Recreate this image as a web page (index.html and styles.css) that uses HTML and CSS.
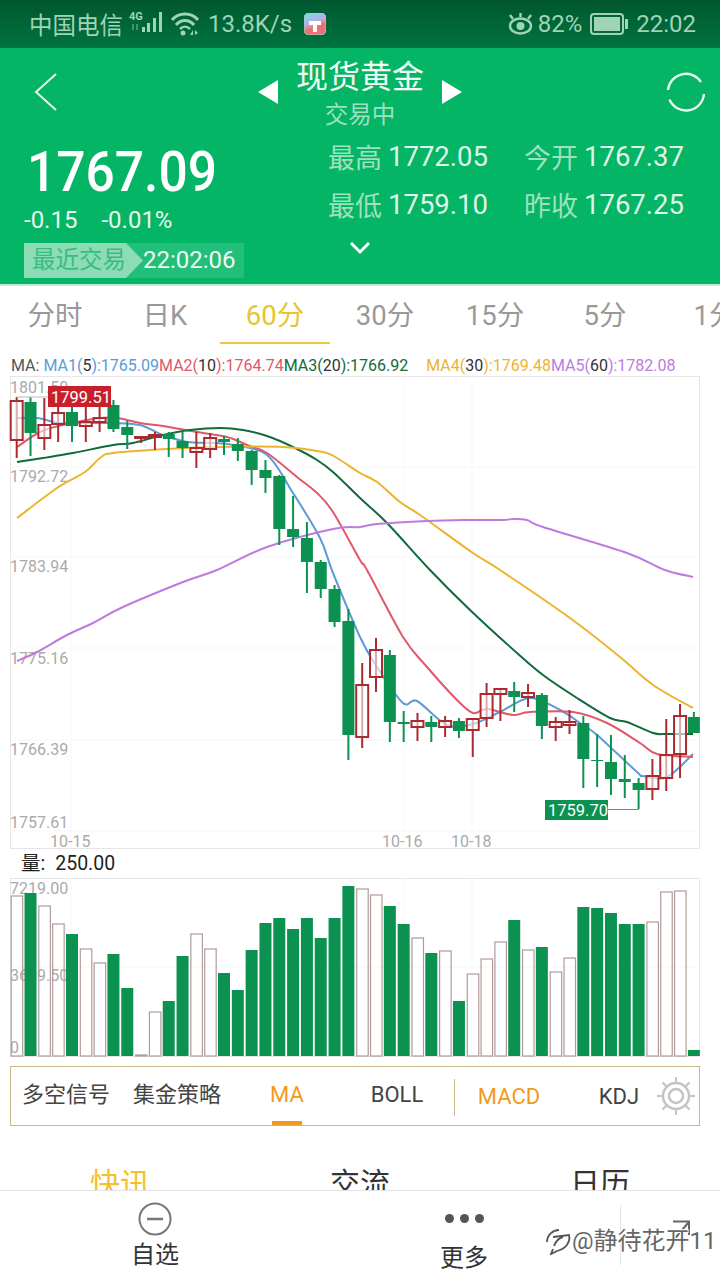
FILE: index.html
```html
<!DOCTYPE html>
<html lang="zh-CN">
<head>
    <meta charset="UTF-8">
    <meta name="viewport" content="width=device-width, initial-scale=1.0">
    <title>现货黄金</title>
    <link rel="stylesheet" href="styles.css">
</head>
<body>
<div class="page">

    <div class="status-bar">
        <div class="status-left">
            <span class="carrier">中国电信</span>
            <svg class="ic-signal" width="36" height="30" viewBox="0 0 36 30">
                <text x="0" y="11" class="net-label">4G</text>
                <rect x="3" y="15" width="2" height="6" class="solid" opacity="0.4"/>
                <rect x="7" y="15" width="2" height="6" class="solid" opacity="0.4"/>
                <rect x="13" y="18" width="3" height="5" class="solid"/>
                <rect x="18" y="14" width="3" height="9" class="solid"/>
                <rect x="24" y="9" width="3" height="14" class="solid"/>
                <rect x="30" y="3" width="3" height="20" class="solid"/>
            </svg>
            <svg class="ic-wifi" width="28" height="26" viewBox="0 0 28 26">
                <path d="M1 9 C8 1 20 1 27 9" fill="none" stroke-width="3"/>
                <path d="M5 14 C10 8 18 8 23 14" fill="none" stroke-width="3"/>
                <path d="M9 18 C12 15 16 15 19 18" fill="none" stroke-width="2.5"/>
                <circle cx="12" cy="22" r="2.5" class="solid"/>
                <path d="M19 24 l3 -5 v5 z M24 19 v5 l3 -2 z" class="solid"/>
            </svg>
            <span class="net-speed">13.8K/s</span>
            <svg class="ic-app" width="22" height="22" viewBox="0 0 22 22">
                <defs>
                    <linearGradient id="appGrad" x1="0.2" y1="0" x2="0.6" y2="1">
                        <stop offset="0" stop-color="#7fdce0"/>
                        <stop offset="0.45" stop-color="#b8a8ea"/>
                        <stop offset="0.7" stop-color="#f0705a"/>
                        <stop offset="1" stop-color="#e8709a"/>
                    </linearGradient>
                </defs>
                <rect width="22" height="22" rx="5" fill="url(#appGrad)"/>
                <path d="M5 8 H17 V12 H13 V19 H9 V12 H5 Z" class="brush"/>
            </svg>
        </div>
        <div class="status-right">
            <svg class="ic-eye" width="25" height="24" viewBox="0 0 25 24">
                <ellipse cx="12.5" cy="14" rx="10.5" ry="7.5" fill="none" stroke-width="2.4"/>
                <circle cx="12.5" cy="14" r="4" class="solid"/>
                <path d="M5 7 L2 3 M12.5 5 V1 M20 7 L23 3" fill="none" stroke-width="2.4"/>
            </svg>
            <span>82%</span>
            <svg class="ic-battery" width="39" height="24" viewBox="0 0 39 24">
                <rect x="1" y="2" width="32" height="20" rx="3" fill="none" stroke-width="2"/>
                <rect x="4" y="5" width="26" height="14" class="solid"/>
                <rect x="35" y="7" width="3" height="10" class="solid"/>
            </svg>
            <span>22:02</span>
        </div>
    </div>

    <div class="header">
        <div class="head-top">
            <svg class="ic-back" width="24" height="38" viewBox="0 0 24 38">
                <path d="M22 1 L2 19 L22 37" fill="none" stroke="#e8f8f0" stroke-width="2"/>
            </svg>
            <div class="title-wrap">
                <i class="arrow-left"></i>
                <div class="title-text">
                    <div class="title">现货黄金</div>
                    <div class="subtitle">交易中</div>
                </div>
                <i class="arrow-right"></i>
            </div>
            <svg class="ic-refresh" width="40" height="40" viewBox="0 0 40 40">
                <path d="M2 18 A18 18 0 0 1 35 10" fill="none" stroke="#e8f8f0" stroke-width="2.4"/>
                <path d="M38 22 A18 18 0 0 1 3.500 27.500" fill="none" stroke="#e8f8f0" stroke-width="2.4"/>
            </svg>
        </div>
        <div class="quote">
            <div class="quote-left">
                <div class="price">1767.09</div>
                <div class="change"><span>-0.15</span><span>-0.01%</span></div>
                <div class="last-trade">
                    <span class="last-label">最近交易</span>
                    <span class="last-time">22:02:06</span>
                </div>
            </div>
            <div class="quote-right">
                <div class="stats">
                    <div class="stat"><span class="stat-label">最高</span><span class="stat-value">1772.05</span></div>
                    <div class="stat"><span class="stat-label">今开</span><span class="stat-value">1767.37</span></div>
                    <div class="stat"><span class="stat-label">最低</span><span class="stat-value">1759.10</span></div>
                    <div class="stat"><span class="stat-label">昨收</span><span class="stat-value">1767.25</span></div>
                </div>
                <div class="expand">
                    <svg width="22" height="14" viewBox="0 0 22 14">
                        <path d="M2 2 L11 11 L20 2" fill="none" stroke="#fff" stroke-width="3"/>
                    </svg>
                </div>
            </div>
        </div>
    </div>

    <div class="periods">
        <div class="period">分时</div>
        <div class="period">日K</div>
        <div class="period active">60分</div>
        <div class="period">30分</div>
        <div class="period">15分</div>
        <div class="period">5分</div>
        <div class="period">1分</div>
    </div>

    <div class="legend">
        <span>MA:</span>
        <span class="ma1 first">MA1(<b>5</b>):1765.09</span><span class="ma2">MA2(<b>10</b>):1764.74</span><span class="ma3">MA3(<b>20</b>):1766.92</span>
        <span class="ma4">MA4(<b>30</b>):1769.48</span><span class="ma5">MA5(<b>60</b>):1782.08</span>
    </div>

    <svg id="priceChart" class="chart" width="720" height="473" viewBox="0 376 720 473"></svg>

    <div class="vol-label"><span>量:</span><span>250.00</span></div>

    <svg id="volChart" class="chart" width="720" height="179" viewBox="0 878 720 179"></svg>

    <div class="indicators">
        <div class="ind">多空信号</div>
        <div class="ind nudge">集金策略</div>
        <div class="ind on">MA</div>
        <div class="ind">BOLL</div>
        <div class="ind low on-text sep">MACD</div>
        <div class="ind low">KDJ</div>
        <svg class="ic-gear" width="40" height="40" viewBox="0 0 40 40">
            <g fill="none" stroke="#c4c4c4">
                <circle cx="20" cy="20" r="13" stroke-width="2.5"/>
                <circle cx="20" cy="20" r="7" stroke-width="2.5"/>
                <path d="M20 1 V7 M20 33 V39 M1 20 H7 M33 20 H39 M6.500 6.500 L10.800 10.800 M29.200 29.200 L33.500 33.500 M33.500 6.500 L29.200 10.800 M10.800 29.200 L6.500 33.500" stroke-width="2"/>
            </g>
        </svg>
    </div>

    <div class="news-tabs">
        <div class="news-tab active">快讯</div>
        <div class="news-tab">交流</div>
        <div class="news-tab">日历</div>
    </div>

    <div class="bottom-bar">
        <div class="bottom-item">
            <svg width="34" height="34" viewBox="0 0 34 34">
                <circle cx="17" cy="17" r="15.500" fill="none" stroke="#777" stroke-width="2"/>
                <path d="M9 17 H25" stroke="#777" stroke-width="2.5"/>
            </svg>
            <span>自选</span>
        </div>
        <div class="bottom-item more">
            <div class="dots"><i></i><i></i><i></i></div>
            <span>更多</span>
        </div>
        <div class="bottom-share">
            <svg width="22" height="24" viewBox="0 0 22 24">
                <path d="M2 22 L18 3 M3 1.500 H19 V15" fill="none" stroke="#666" stroke-width="2"/>
            </svg>
        </div>
    </div>

    <div class="watermark">
        <svg width="26" height="28" viewBox="0 0 26 28">
            <path d="M14 3 C8 3 2 8 2 15 M8 10 L24 8 C26 16 20 22 12 24 L6 27 L8 22" fill="none" stroke="#555" stroke-width="1.800"/>
            <path d="M9 19 C11 14 13 11 18 10" fill="none" stroke="#555" stroke-width="1.800"/>
        </svg>
        <span>@静待花开11</span>
    </div>

</div>
<script src="script.js"></script>
</body>
</html>
```

FILE: styles.css
```css
* {
    box-sizing: border-box;
}
body {
    margin: 0;
    background: #fff;
    font-family: Roboto, "Noto Sans CJK SC", sans-serif;
    color: #333;
}
.page {
    position: relative;
    width: 720px;
    height: 1280px;
    overflow: hidden;
}

/* status bar */
.status-bar {
    height: 48px;
    display: flex;
    justify-content: space-between;
    align-items: center;
    padding: 0 24px 0 29px;
    background: linear-gradient(#00572f, #007440);
    color: #9fd4b6;
    font-size: 24px;
}
.status-bar svg {
    fill: #9fd4b6;
    stroke: #9fd4b6;
}
.status-bar .solid {
    stroke: none;
}
.status-bar .brush {
    fill: #fff;
    stroke: none;
}
.status-left, .status-right {
    display: flex;
    align-items: center;
}
.carrier {
    font-size: 23.500px;
}
.ic-signal {
    margin-left: 6px;
}
.ic-wifi {
    margin-left: 6px;
}
.net-label {
    font-size: 11px;
    font-weight: 700;
    stroke: none;
}
.net-speed {
    margin-left: 9px;
}
.ic-app {
    margin-left: 12px;
}
.status-right span {
    margin-left: 5px;
}
.ic-battery {
    margin-left: 8px;
}
.status-right .ic-battery + span {
    margin-left: 7px;
}

/* green header */
.header {
    height: 238px;
    background: #03b565;
    border-bottom: 2px solid #bfead4;
}
.head-top {
    height: 84px;
    display: flex;
    justify-content: space-between;
    padding: 25px 14px 0 34px;
    position: relative;
}
.title-wrap {
    position: absolute;
    left: 258px;
    top: 10px;
    width: 204px;
    height: 74px;
    display: flex;
    justify-content: space-between;
    align-items: flex-start;
}
.arrow-left, .arrow-right {
    margin-top: 22px;
    width: 0;
    height: 0;
    border-top: 12px solid transparent;
    border-bottom: 12px solid transparent;
}
.arrow-left {
    border-right: 20px solid #fff;
}
.arrow-right {
    border-left: 20px solid #fff;
}
.title-text {
    text-align: center;
}
.title {
    font-size: 32px;
    line-height: 38px;
    color: #f2fbf6;
}
.subtitle {
    font-size: 23.500px;
    line-height: 38px;
    color: #9fe0bd;
}
.ic-refresh {
    margin-top: -1px;
}
.quote {
    display: flex;
}
.quote-left {
    flex: 0 0 328px;
    padding: 10px 0 0 24px;
}
.price {
    font-size: 51.500px;
    font-weight: 500;
    line-height: 60px;
    padding-left: 3px;
    color: #fff;
    transform: translateY(1px) scaleY(1.08);
    transform-origin: left center;
}
.change {
    display: flex;
    gap: 24px;
    height: 36px;
    align-items: center;
    font-size: 24px;
    color: #e8f8f0;
}
.last-trade {
    display: flex;
    width: 220px;
    height: 35px;
    margin-top: 5px;
    background: #22bf7a;
}
.last-label {
    width: 119px;
    padding-left: 8px;
    line-height: 35px;
    font-size: 23.500px;
    background: #8cdcb6;
    color: #37bd7f;
    clip-path: polygon(0 0, 102px 0, 100% 50%, 102px 100%, 0 100%);
    white-space: nowrap;
}
.last-time {
    flex: 1;
    line-height: 35px;
    font-size: 24px;
    color: #eefaf4;
}
.stats {
    display: grid;
    grid-template-columns: 196px 196px;
    grid-auto-rows: 48px;
}
.stat {
    display: flex;
    align-items: center;
    gap: 6px;
    font-size: 27px;
}
.stat-label {
    color: #9fe0bd;
}
.stat-value {
    font-size: 27.500px;
    color: #dff5e9;
}
.expand {
    height: 40px;
    width: 64px;
    display: flex;
    align-items: center;
    justify-content: center;
}

/* period tabs */
.periods {
    display: flex;
    height: 58px;
}
.period {
    flex: 0 0 110px;
    text-align: center;
    font-size: 27.500px;
    line-height: 60px;
    color: #999;
    white-space: nowrap;
}
.period.active {
    color: #e6c531;
    border-bottom: 2px solid #edc93a;
}

/* MA legend */
.legend {
    height: 32px;
    padding: 12px 0 0 11px;
    font-size: 16px;
    line-height: 20px;
    white-space: nowrap;
    color: #555;
}
.legend b {
    font-weight: 400;
    color: #333;
}
.ma1 { color: #5b9bd8; }
.ma2 { color: #e0586a; }
.ma3 { color: #0f6b3c; }
.ma4 { color: #eeb32e; margin-left: 14px; }
.ma5 { color: #bd7be0; }

/* charts */
.chart {
    display: block;
}
.chart text {
    font-family: Roboto, sans-serif;
    font-size: 16px;
    fill: #aaa;
}
.chart .tag {
    font-size: 16.500px;
    fill: #fff;
}
.vol-label {
    display: flex;
    gap: 10px;
    height: 29px;
    padding-left: 21px;
    font-size: 19.500px;
    line-height: 29px;
    color: #222;
}

/* indicator toolbar */
.indicators {
    position: relative;
    display: flex;
    width: 690px;
    height: 60px;
    margin: 9px 0 0 10px;
    border: 1px solid #c9b884;
}
.ind {
    position: relative;
    flex: 0 0 110px;
    text-align: center;
    font-size: 22px;
    line-height: 56px;
    color: #444;
}
.ind.nudge {
    margin-left: 1px;
}
.ind.low {
    line-height: 60px;
}
.ind.on {
    color: #f39a1e;
}
.ind.on::after {
    content: "";
    position: absolute;
    left: 40px;
    bottom: 0;
    width: 30px;
    height: 4px;
    background: #f39a1e;
}
.ind.on-text {
    color: #f39a1e;
}
.ind.sep {
    margin-left: 2px;
}
.ind.sep::before {
    content: "";
    position: absolute;
    left: 0;
    top: 12px;
    height: 37px;
    width: 1px;
    background: #c9b884;
}
.ic-gear {
    position: absolute;
    right: 3px;
    top: 9px;
}

/* news tabs, cut off by the bottom bar */
.news-tabs {
    display: flex;
    margin-top: 38px;
}
.news-tab {
    flex: 0 0 240px;
    text-align: center;
    font-size: 30px;
    line-height: 40px;
    color: #333;
}
.news-tab.active {
    color: #f5c02e;
}

/* bottom bar */
.bottom-bar {
    position: absolute;
    left: 0;
    bottom: 0;
    width: 720px;
    height: 90px;
    display: grid;
    grid-template-columns: 310px 310px 100px;
    background: #fff;
    border-top: 1px solid #e4e4e4;
}
.bottom-item {
    display: flex;
    flex-direction: column;
    align-items: center;
    padding-top: 11px;
    font-size: 24px;
    line-height: 34px;
    color: #333;
}
.bottom-item span {
    margin-top: 2px;
}
.bottom-item.more {
    padding: 12px 2px 0 0;
}
.dots {
    display: flex;
    gap: 6px;
    height: 36px;
    padding-top: 11px;
}
.dots i {
    width: 9px;
    height: 9px;
    border-radius: 50%;
    background: #555;
}
.bottom-share {
    margin: 14px 0 15px;
    border-left: 1px solid #e4e4e4;
    padding: 15px 0 0 49px;
}
.watermark {
    position: absolute;
    left: 545px;
    top: 1227px;
    display: flex;
    align-items: center;
    gap: 1px;
    font-size: 24px;
    line-height: 28px;
    color: #666;
    text-shadow: 1px 1px 0 #fff, -1px -1px 0 #fff, 1px -1px 0 #fff, -1px 1px 0 #fff;
}
```

FILE: script.js
```js
const SVG_GREEN = '#0b9150';
const SVG_RED = '#ab2a30';

// body top, body bottom, wick top, wick bottom, up(1)/down(0)
const candles = [
    [401, 440, 397, 458, 1], [402, 433, 397, 456, 0], [425, 438, 398, 450, 1], [413, 424, 407, 442, 1],
    [412, 426, 407, 442, 0], [422, 426, 407, 442, 1], [418, 422, 407, 432, 1], [405, 429, 400, 432, 0],
    [427, 435, 421, 449, 0], [437, 438, 436, 443, 1], [435, 437, 432, 450, 1], [434, 439, 432, 457, 0],
    [441, 448, 432, 458, 0], [448, 452, 432, 468, 1], [438, 449, 433, 458, 1], [439, 442, 436, 455, 0],
    [444, 451, 438, 461, 0], [451, 470, 450, 485, 0], [470, 478, 460, 493, 0], [476, 529, 475, 545, 0],
    [529, 537, 496, 547, 0], [538, 562, 522, 593, 0], [562, 589, 560, 598, 0], [589, 622, 585, 627, 0],
    [621, 735, 609, 760, 0], [685, 737, 663, 748, 1], [650, 677, 638, 692, 1], [655, 722, 650, 742, 0],
    [722, 724, 711, 742, 0], [721, 727, 713, 741, 1], [722, 727, 716, 742, 0], [721, 727, 716, 737, 1],
    [721, 731, 718, 738, 0], [719, 730, 719, 757, 1], [694, 718, 683, 727, 1], [689, 694, 689, 721, 1],
    [691, 697, 682, 712, 0], [693, 697, 684, 707, 1], [695, 726, 693, 739, 0], [722, 727, 717, 741, 1],
    [722, 725, 710, 734, 1], [723, 759, 716, 788, 0], [760, 761, 734, 787, 0], [762, 779, 735, 795, 0],
    [779, 782, 755, 798, 0], [783, 790, 778, 809, 0], [776, 789, 759, 800, 1], [755, 778, 719, 791, 1],
    [716, 754, 704, 778, 1], [717, 733, 712, 733, 0]
];

const maLines = [
    ['#5b9bd8', '17,418 37,418 60,423 83,423 113,423 140,425 163,435 187,442 213,443 233,445 267,455 293,493 320,538 333,573 360,637 377,667 403,703 417,701 447,725 473,724 500,712 530,698 560,710 580,723 597,735 637,772 643,776 667,777 693,754'],
    ['#e0586a', '17,447 40,432 63,425 100,418 117,418 140,423 163,426 197,432 227,437 247,445 267,453 297,477 317,493 333,512 360,560 367,570 403,637 427,667 457,700 473,713 487,709 513,715 530,712 573,712 607,723 640,743 657,754 693,757'],
    ['#0f6b3c', '17,462 43,458 73,453 113,445 133,443 163,435 190,430 220,428 243,430 267,436 293,447 317,460 333,472 360,498 387,523 430,570 470,610 517,653 543,675 577,698 610,718 627,722 653,733 667,734 693,734'],
    ['#eeb32e', '17,518 57,488 85,472 100,458 113,453 167,449 217,447 283,447 323,452 337,458 360,473 377,482 400,502 420,515 473,553 500,570 570,618 620,657 653,685 693,708'],
    ['#bd7be0', '17,661 37,652 67,635 93,623 123,607 183,582 217,570 267,547 333,529 360,527 377,524 427,521 473,520 503,520 513,519 527,520 543,527 627,553 665,570 693,577']
];

// volume bar tops, filled(0) or hollow(1)
const volumes = [
    [896, 1], [893, 0], [906, 1], [924, 1], [934, 0], [949, 1], [963, 1], [954, 0], [988, 0], [1055, 1],
    [1012, 1], [1001, 0], [956, 0], [934, 1], [949, 1], [973, 0], [990, 0], [950, 0], [923, 0], [918, 0],
    [929, 0], [918, 0], [938, 0], [918, 0], [886, 0], [889, 1], [895, 1], [906, 0], [924, 0], [938, 1],
    [953, 0], [951, 1], [1001, 0], [974, 1], [959, 1], [942, 1], [920, 0], [950, 1], [947, 0], [972, 1],
    [958, 1], [907, 0], [908, 0], [913, 0], [924, 0], [924, 0], [922, 1], [892, 1], [891, 1], [1050, 0]
];

function cx(i) {
    return 16.7 + 13.82 * i;
}

function line(x1, y1, x2, y2, color, w) {
    return `<line x1="${x1}" y1="${y1}" x2="${x2}" y2="${y2}" stroke="${color}" stroke-width="${w}"/>`;
}

function frame(top, bottom, rows) {
    let s = `<rect x="10.5" y="${top + 0.5}" width="689" height="${bottom - top}" fill="none" stroke="#e6e6e6"/>`;
    [71, 404, 472].forEach(x => { s += line(x, top, x, bottom, '#f7f7f7', 1); });
    rows.forEach(y => { s += line(10, y, 699, y, '#f7f7f7', 1); });
    return s;
}

function label(x, y, t) {
    return `<text x="${x}" y="${y}">${t}</text>`;
}

// Catmull-Rom through the points, so the MA lines come out smooth
function smooth(str) {
    const p = str.split(' ').map(s => s.split(',').map(Number));
    let d = `M${p[0][0]} ${p[0][1]}`;
    for (let i = 0; i < p.length - 1; i++) {
        const a = p[Math.max(i - 1, 0)], b = p[i], c = p[i + 1], e = p[Math.min(i + 2, p.length - 1)];
        const c1x = b[0] + (c[0] - a[0]) / 6, c1y = b[1] + (c[1] - a[1]) / 6;
        const c2x = c[0] - (e[0] - b[0]) / 6, c2y = c[1] - (e[1] - b[1]) / 6;
        d += ` C${c1x.toFixed(1)} ${c1y.toFixed(1)} ${c2x.toFixed(1)} ${c2y.toFixed(1)} ${c[0]} ${c[1]}`;
    }
    return d;
}

// Price chart
let price = frame(376, 848, [467, 557, 648, 740, 831]);
[['1801.50', 393], ['1792.72', 482], ['1783.94', 572], ['1775.16', 664], ['1766.39', 755], ['1757.61', 828]].forEach(a => {
    price += label(10, a[1], a[0]);
});
price += label(50, 847, '10-15') + label(382, 847, '10-16') + label(451, 847, '10-18');
maLines.forEach(m => {
    price += `<path d="${smooth(m[1])}" fill="none" stroke="${m[0]}" stroke-width="2"/>`;
});
candles.forEach((c, i) => {
    const x = cx(i);
    const color = c[4] ? SVG_RED : SVG_GREEN;
    price += line(x, c[2], x, c[3], color, 2);
    if (c[4]) {
        price += `<rect x="${x - 6}" y="${c[0]}" width="12" height="${c[1] - c[0]}" fill="#fff" fill-opacity="0.6" stroke="${color}" stroke-width="2"/>`;
    } else {
        const w = Math.min(12, 700 - (x - 6));
        price += `<rect x="${x - 6}" y="${c[0]}" width="${w}" height="${c[1] - c[0]}" fill="${color}"/>`;
    }
});
price += line(16, 397, 48, 397, '#b9b9b9', 1);
price += `<rect x="48" y="386" width="63" height="21" fill="#c8202a"/><text class="tag" x="51" y="402.5">1799.51</text>`;
price += line(608, 809.5, 639, 809.5, '#4aa678', 1);
price += `<rect x="545" y="800" width="63" height="20" fill="${SVG_GREEN}"/><text class="tag" x="548" y="815.5">1759.70</text>`;
document.getElementById('priceChart').innerHTML = price;

// Volume chart
let vol = frame(878, 1056, [967]);
vol += label(10, 894, '7219.00') + label(10, 981, '3609.50') + label(10, 1053, '0');
volumes.forEach((v, i) => {
    const x = cx(i);
    const h = 1056 - v[0];
    if (v[1]) {
        vol += `<rect x="${x - 5.5}" y="${v[0]}" width="11.5" height="${h}" fill="none" stroke="#b39a9a" stroke-width="1.2"/>`;
    } else {
        const w = Math.min(12, 700 - (x - 6));
        vol += `<rect x="${x - 6}" y="${v[0]}" width="${w}" height="${h}" fill="${SVG_GREEN}"/>`;
    }
});
document.getElementById('volChart').innerHTML = vol;
```
